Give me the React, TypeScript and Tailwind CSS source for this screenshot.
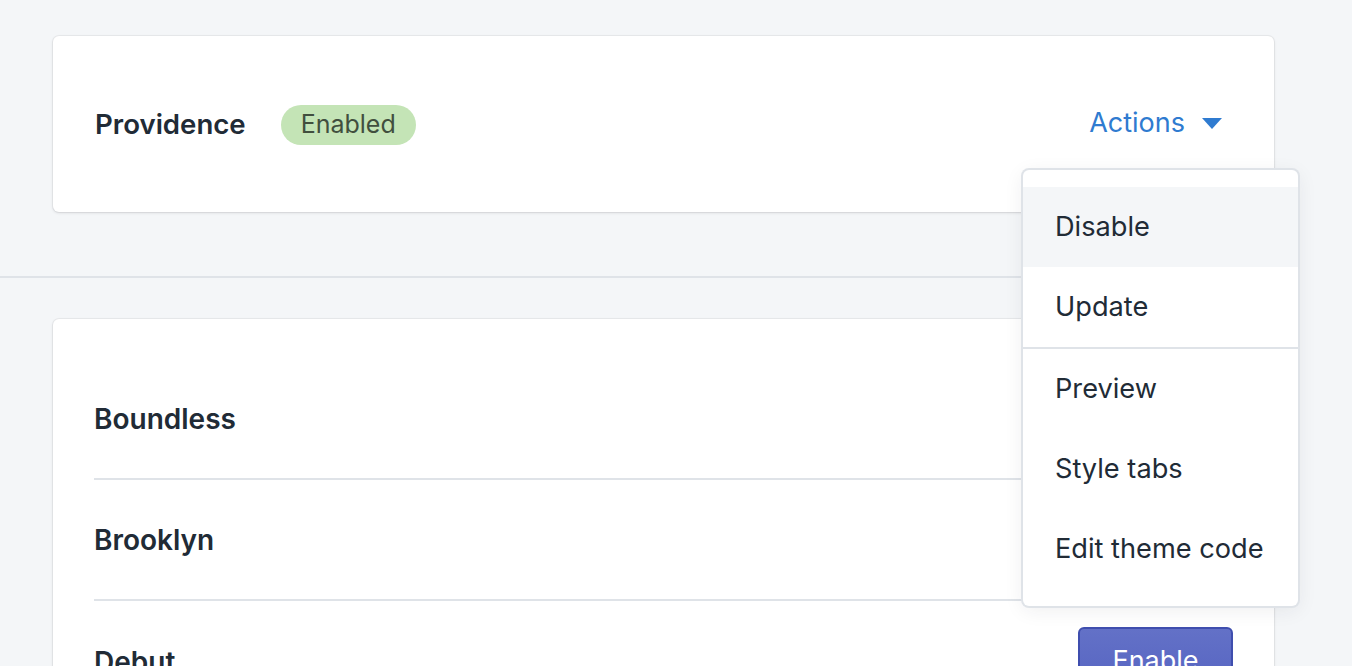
import React from 'react';

const font = { fontFamily: 'Inter, "Noto Sans", sans-serif' };

const ThemeRow: React.FC<{ name: string; last?: boolean; children?: React.ReactNode }> = ({
  name,
  last,
  children,
}) => (
  <div
    className={`flex items-center justify-between h-[121px] ${
      last ? '' : 'border-b-2 border-[#dfe3e8]'
    }`}
  >
    <h3 className="text-[28px] font-semibold text-[#212b36]">{name}</h3>
    {children}
  </div>
);

const MenuItem: React.FC<{ label: string; active?: boolean }> = ({ label, active }) => (
  <li
    className={`flex items-center h-20 pl-[32px] text-[27.2px] text-[#212b36] ${
      active ? 'bg-[#f4f6f8]' : ''
    }`}
  >
    {label}
  </li>
);

const App: React.FC = () => {
  return (
    <div className="h-[666px] w-full overflow-hidden bg-[#f4f6f8]" style={font}>
      <section className="pt-9 pb-16">
        <div className="relative ml-[53px] w-[1221px] h-[176px] rounded-md bg-white shadow-[0_0_0_1px_rgba(63,63,68,0.06),0_1px_3px_rgba(63,63,68,0.15)]">
          <div className="flex h-full items-center justify-between pl-[42px] pr-[52px]">
            <div className="flex items-center gap-[35px] mt-0.5">
              <h2 className="text-[27.6px] font-semibold text-[#212b36]">Providence</h2>
              <span className="flex h-10 items-center rounded-full bg-[#c4e4b6] px-5 text-[25px] text-[#414f3e]">
                Enabled
              </span>
            </div>
            <button className="flex items-center gap-[17px] text-[27px] text-[#2f7bd0] -mt-0.5">
              Actions
              <svg width="20" height="11" viewBox="0 0 20 11">
                <path d="M0 0h20L10 11z" fill="#2f7bd0" />
              </svg>
            </button>
          </div>

          <div className="absolute left-[970px] top-[134px] z-10 w-[275px] rounded-md bg-white py-[17px] shadow-[0_0_0_2px_rgba(223,227,232,1),0_4px_20px_rgba(33,43,54,0.08)]">
            <ul>
              <MenuItem label="Disable" active />
              <MenuItem label="Update" />
            </ul>
            <ul className="border-t-2 border-[#dfe3e8]">
              <MenuItem label="Preview" />
              <MenuItem label="Style tabs" />
              <MenuItem label="Edit theme code" />
            </ul>
          </div>
        </div>
      </section>

      <div className="mr-[60px] border-t-2 border-[#dfe3e8]" />

      <section className="pt-[41px]">
        <div className="ml-[53px] w-[1221px] rounded-md bg-white px-[41px] pt-10 shadow-[0_0_0_1px_rgba(63,63,68,0.06),0_1px_3px_rgba(63,63,68,0.15)]">
          <ThemeRow name="Boundless" />
          <ThemeRow name="Brooklyn" />
          <ThemeRow name="Debut" last>
            <button className="h-[70px] w-[155px] rounded-md border-2 border-[#3f4eae] bg-gradient-to-b from-[#6371c7] to-[#5563c1] text-[27px] text-white">
              Enable
            </button>
          </ThemeRow>
        </div>
      </section>
    </div>
  );
};

export default App;
